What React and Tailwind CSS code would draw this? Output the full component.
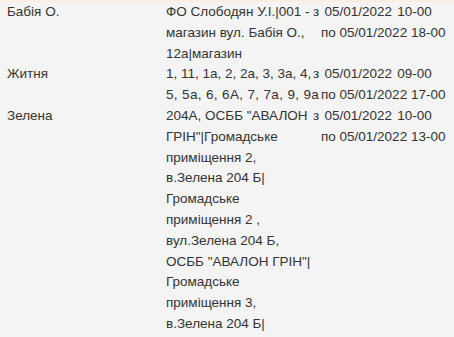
import React from 'react';

const rows = [
  {
    street: 'Бабія О.',
    lines: ['ФО Слободян У.І.|001 -', 'магазин вул. Бабія О.,', '12а|магазин'],
    from: 'з 05/01/2022 10-00',
    to: 'по 05/01/2022 18-00',
  },
  {
    street: 'Житня',
    lines: ['1, 11, 1а, 2, 2а, 3, 3а, 4,', '5, 5а, 6, 6А, 7, 7а, 9, 9а'],
    wide: 1,
    from: 'з 05/01/2022 09-00',
    to: 'по 05/01/2022 17-00',
  },
  {
    street: 'Зелена',
    lines: [
      '204А, ОСББ "АВАЛОН',
      'ГРІН"|Громадське',
      'приміщення 2,',
      'в.Зелена 204 Б|',
      'Громадське',
      'приміщення 2 ,',
      'вул.Зелена 204 Б,',
      'ОСББ "АВАЛОН ГРІН"|',
      'Громадське',
      'приміщення 3,',
      'в.Зелена 204 Б|',
    ],
    from: 'з 05/01/2022 10-00',
    to: 'по 05/01/2022 13-00',
  },
];

export default function App() {
  return (
    <div
      className="w-[454px] h-[337px] overflow-hidden bg-[#f4f4f4] border-t-2 border-[#fcefe2] text-[13.5px] leading-[20.8px] text-[#333333]"
      style={{ fontFamily: '"Liberation Sans", Arial, sans-serif' }}
    >
      {rows.map((r) => (
        <div key={r.street} className="grid grid-cols-[166px_147px_1fr]">
          <div className="pl-[7px] whitespace-nowrap">{r.street}</div>
          <div className="whitespace-nowrap">
            {r.lines.map((l, i) => (
              <div key={i} className={i === r.wide ? 'tracking-[0.35px]' : ''}>
                {l}
              </div>
            ))}
          </div>
          <div className="whitespace-nowrap">
            <div className="[word-spacing:1.5px]">{r.from}</div>
            <div className="pl-[8px]">{r.to}</div>
          </div>
        </div>
      ))}
    </div>
  );
}
